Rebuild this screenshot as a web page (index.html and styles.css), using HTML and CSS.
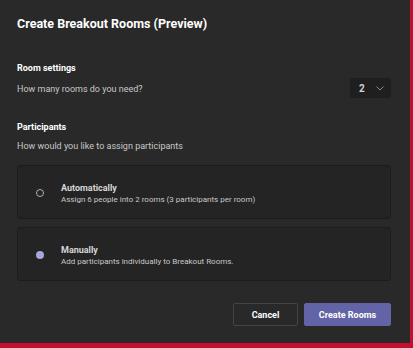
FILE: index.html
```html
<!DOCTYPE html>
<html lang="en">
<head>
    <meta charset="UTF-8">
    <meta name="viewport" content="width=device-width, initial-scale=1.0">
    <title>Create Breakout Rooms</title>
    <link rel="stylesheet" href="styles.css">
</head>
<body>
    <div class="dialog">
        <h1 class="title">Create Breakout Rooms (Preview)</h1>

        <div class="section rooms">
            <h3>Room settings</h3>
            <div class="row">
                <span class="hint">How many rooms do you need?</span>
                <div class="select">
                    <span>2</span>
                    <svg width="8" height="5" viewBox="0 0 8 5"><path d="M0.5 0.5 L4 4 L7.5 0.5" fill="none" stroke="#8a8a8a" stroke-width="1"/></svg>
                </div>
            </div>
        </div>

        <div class="section participants">
            <h3>Participants</h3>
            <div class="hint">How would you like to assign participants</div>
        </div>

        <div class="options">
            <div class="option">
                <span class="radio"></span>
                <div>
                    <div class="option-title">Automatically</div>
                    <div class="option-desc">Assign 6 people into 2 rooms (3 participants per room)</div>
                </div>
            </div>
            <div class="option">
                <span class="radio checked"></span>
                <div>
                    <div class="option-title">Manually</div>
                    <div class="option-desc">Add participants individually to Breakout Rooms.</div>
                </div>
            </div>
        </div>

        <div class="actions">
            <button class="btn">Cancel</button>
            <button class="btn primary">Create Rooms</button>
        </div>
    </div>
</body>
</html>
```

FILE: styles.css
```css
body {
    margin: 0;
    background-color: #c50f2f;
    font-family: Roboto, sans-serif;
    color: #ffffff;
}

.dialog {
    width: 410px;
    height: 343px;
    box-sizing: border-box;
    background-color: #292929;
    padding: 15px 19px 0 17px;
}

.title {
    margin: 0;
    font-size: 12.5px;
    font-weight: bold;
    line-height: 18px;
}

.section h3 {
    margin: 0;
    font-size: 9px;
    font-weight: bold;
    line-height: 13px;
}

.rooms {
    margin-top: 29px;
}

.hint {
    font-size: 9px;
    color: #c8c8c8;
    line-height: 13px;
}

.row {
    display: flex;
    align-items: center;
    justify-content: space-between;
    margin-top: 3px;
}

.row .hint {
    padding-top: 3px;
}

.select {
    width: 41px;
    height: 20px;
    box-sizing: border-box;
    background-color: #1f1f1f;
    border-radius: 2px;
    display: flex;
    align-items: center;
    justify-content: space-between;
    padding: 0 7px 0 9px;
    font-size: 10px;
    font-weight: bold;
    color: #d0d0d0;
}

.participants {
    margin-top: 23px;
}

.participants .hint {
    margin-top: 6px;
}

.options {
    display: flex;
    flex-direction: column;
    gap: 8px;
    margin-top: 12px;
}

.option {
    height: 54px;
    box-sizing: border-box;
    background-color: #242424;
    border: 1px solid #1c1c1c;
    border-radius: 3px;
    display: flex;
    align-items: center;
    padding-left: 18px;
    padding-top: 2px;
}

.radio {
    width: 8px;
    height: 8px;
    box-sizing: border-box;
    border: 1px solid #b0b0b0;
    border-radius: 50%;
    margin-right: 17px;
}

.radio.checked {
    border: none;
    background-color: #a6a7dc;
}

.option-title {
    font-size: 9px;
    font-weight: bold;
    color: #d6d6d6;
    line-height: 12px;
}

.option-desc {
    font-size: 8px;
    color: #c8c8c8;
    line-height: 11px;
}

.actions {
    display: flex;
    justify-content: flex-end;
    gap: 6px;
    margin-top: 22px;
}

.btn {
    height: 23px;
    padding: 0;
    width: 65px;
    background-color: #292929;
    border: 1px solid #444444;
    border-radius: 2px;
    color: #ffffff;
    font-family: Roboto, sans-serif;
    font-size: 9px;
    font-weight: bold;
}

.btn.primary {
    width: 87px;
    background-color: #6264a7;
    border-color: #6264a7;
}
```
